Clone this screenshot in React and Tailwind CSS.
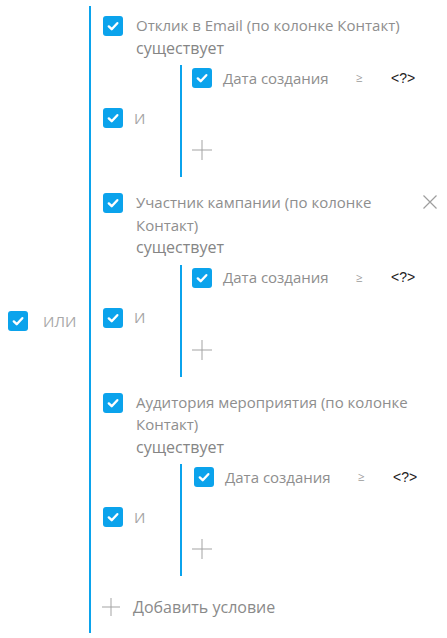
import React from "react";

const Check = () => (
  <span className="flex h-[20px] w-[20px] shrink-0 items-center justify-center rounded-[3px] bg-[#0ba3ec]">
    <svg width="20" height="20" viewBox="0 0 20 20" fill="none">
      <path d="M5.8 10.4 L8.7 13.2 L14.3 7.2" stroke="#fff" strokeWidth="2.4" strokeLinecap="round" strokeLinejoin="round" />
    </svg>
  </span>
);

const Plus = ({ size = 20 }) => (
  <svg width={size} height={size} viewBox={`0 0 ${size} ${size}`} fill="none">
    <path d={`M${size / 2} 0 V${size} M0 ${size / 2} H${size}`} stroke="#a3a3a3" strokeWidth="1" />
  </svg>
);

const Cross = () => (
  <svg width="14" height="14" viewBox="0 0 14 14" fill="none">
    <path d="M0.5 0.5 L13.5 13.5 M13.5 0.5 L0.5 13.5" stroke="#9e9e9e" strokeWidth="1.2" />
  </svg>
);

const Block = ({ title, closable, shift, className }) => (
  <div className={className}>
    <div className="flex items-start">
      <div className="mt-[2px]">
        <Check />
      </div>
      <div className="ml-[13px] min-w-0 flex-1 text-[15px] font-normal leading-[22.5px] text-[#8e8e8e]">
        <div>{title}</div>
        <div className="text-[16px] text-[#858585]">существует</div>
      </div>
      <div className="flex w-[35px] shrink-0 justify-center pt-[4px]">
        {closable && <Cross />}
      </div>
    </div>
    <div className="mt-[6px] flex">
      <div className="flex w-[77px] shrink-0 items-center pb-[6px]">
        <Check />
        <span className="ml-[11px] text-[15px] text-[#a5a5a5]">И</span>
      </div>
      <div className="flex h-[112px]">
        <div className="w-[2px] bg-[#0ba3ec]" />
        <div className="pl-[10px] pt-[3px]">
          <div className={`flex h-[20px] items-center ${shift ? "pl-[2px]" : ""}`}>
            <Check />
            <span className="ml-[11px] w-[133px] text-[15px] text-[#8e8e8e]">Дата создания</span>
            <span className="w-[35px] text-[12px] text-[#9a9a9a]">≥</span>
            <span className="font-['Liberation_Sans',sans-serif] text-[14px] font-normal text-[#222]">&lt;?&gt;</span>
          </div>
          <div className="mt-[52px]">
            <Plus />
          </div>
        </div>
      </div>
    </div>
  </div>
);

export default function App() {
  return (
    <div className="flex h-[638px] w-[447px] bg-white pt-[6px] font-['Open_Sans',sans-serif]">
      <div className="flex h-[627px] w-[89px] shrink-0 items-center pl-[8px] pt-[3px]">
        <Check />
        <span className="ml-[15px] text-[15px] text-[#a8a8a8]">ИЛИ</span>
      </div>
      <div className="h-[627px] w-[2px] shrink-0 bg-[#0ba3ec]" />
      <div className="h-[627px] flex-1 pl-[12px] pt-[8px]">
        <Block title="Отклик в Email (по колонке Контакт)" />
        <Block className="mt-[14px]" title="Участник кампании (по колонке Контакт)" closable />
        <Block className="mt-[14px]" title="Аудитория мероприятия (по колонке Контакт)" shift />
        <div className="mt-[19px] flex h-[24px] items-center">
          <span className="-ml-[1px]">
            <Plus size={18} />
          </span>
          <span className="ml-[13px] text-[16px] text-[#8a8a8a]">Добавить условие</span>
        </div>
      </div>
    </div>
  );
}
